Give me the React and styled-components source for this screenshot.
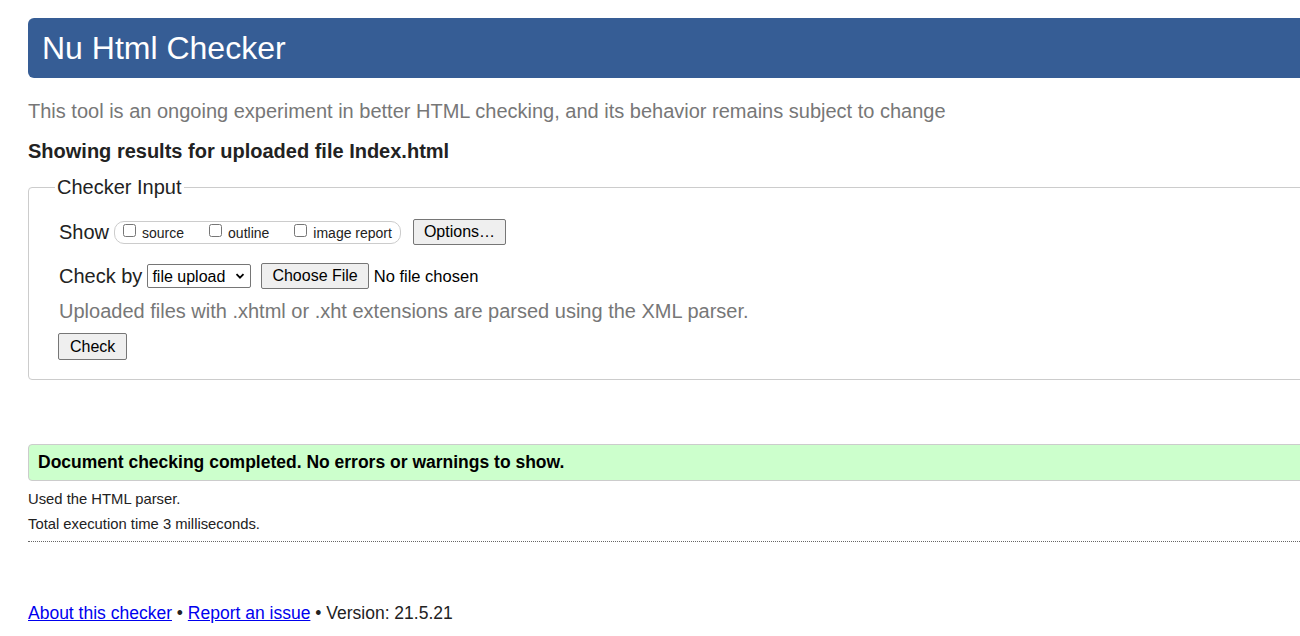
import React from 'react';
import styled, { createGlobalStyle } from 'styled-components';

const GlobalStyle = createGlobalStyle`
  html, body {
    margin: 0;
    padding: 0;
    overflow: hidden;
    background: #fff;
  }
  body {
    font-family: 'Liberation Sans', Arial, sans-serif;
    color: #222;
  }
`;

const Page = styled.div`
  width: 1320px;
  padding-left: 28px;
  padding-top: 18px;
`;

const Header = styled.header`
  height: 60px;
  background: #365d95;
  border-radius: 6px;
  padding-left: 14px;
  display: flex;
  align-items: center;
`;

const Title = styled.h1`
  margin: 0;
  font-size: 32px;
  font-weight: normal;
  color: #fff;
  line-height: 60px;
`;

const Intro = styled.p`
  margin: 21px 0 0;
  font-size: 20px;
  line-height: 24px;
  color: #777;
`;

const Heading = styled.h2`
  margin: 16px 0 0;
  font-size: 20px;
  line-height: 24px;
  font-weight: bold;
  color: #222;
`;

const Fieldset = styled.fieldset`
  margin: 13px 0 0;
  border: 1px solid #ccc;
  border-radius: 4px;
  padding: 20px 0 19px 26px;
  min-width: 0;
`;

const Legend = styled.legend`
  font-size: 20px;
  line-height: 23px;
  padding: 0 2px;
  color: #222;
`;

const Row = styled.div`
  display: flex;
  align-items: center;
  height: 26px;
  padding-left: 4px;
  margin-top: ${(p) => p.$mt || 0}px;
  font-size: 20px;
  color: #222;
`;

const RowLabel = styled.span`
  margin-right: 5px;
`;

const Group = styled.span`
  display: inline-flex;
  align-items: center;
  gap: 25px;
  height: 21px;
  padding: 0 8px;
  border: 1px solid #ccc;
  border-radius: 10px;
  font-size: 14px;
  margin-right: 12px;
  margin-top: 1px;
`;

const Opt = styled.label`
  display: inline-flex;
  align-items: center;
  gap: 6px;

  input {
    width: 13px;
    height: 13px;
    margin: 0 0 4px;
  }
`;

const Btn = styled.button`
  font-family: 'Liberation Sans', Arial, sans-serif;
  font-size: 16px;
  height: ${(p) => p.$h || 26}px;
  padding: 0 ${(p) => p.$px || 10}px;
  background: #efefef;
  color: #000;
  border: 1px solid #767676;
  border-radius: 2px;
`;

const SelectWrap = styled.span`
  position: relative;
  display: inline-flex;
  margin-right: 10px;

  svg {
    position: absolute;
    right: 6px;
    top: 8px;
    pointer-events: none;
  }
`;

const Select = styled.select`
  appearance: none;
  font-family: 'Liberation Sans', Arial, sans-serif;
  font-size: 16px;
  height: 24px;
  width: 104px;
  padding: 0 0 0 4px;
  color: #000;
  border: 1px solid #767676;
  border-radius: 2px;
  background: #fff;
`;

const FileNote = styled.span`
  font-size: 16.5px;
  color: #000;
  margin-left: 5px;
`;

const Hint = styled.p`
  margin: 10px 0 0;
  padding-left: 4px;
  font-size: 20px;
  line-height: 24px;
  color: #777;
`;

const CheckWrap = styled.div`
  margin-top: 10px;
  padding-left: 3px;
`;

const Success = styled.p`
  margin: 64px 0 0;
  padding: 8px 9px;
  background: #ccffcc;
  border: 1px solid #ccc;
  border-radius: 4px;
  font-size: 17.5px;
  line-height: 19px;
  font-weight: bold;
  color: #000;
`;

const Details = styled.div`
  padding-top: 2px;
  padding-bottom: 8px;
  border-bottom: 1px dotted #666;
`;

const Detail = styled.p`
  margin: 8px 0 0;
  font-size: 14.8px;
  line-height: 17px;
  color: #222;
`;

const Footer = styled.p`
  margin: 61px 0 0;
  font-size: 17.5px;
  line-height: 20px;
  color: #222;

  a {
    color: #0000ee;
  }
`;

export default function App() {
  return (
    <>
      <GlobalStyle />
      <Page>
        <Header>
          <Title>Nu Html Checker</Title>
        </Header>
        <Intro>
          This tool is an ongoing experiment in better HTML checking, and its behavior remains subject to change
        </Intro>
        <Heading>Showing results for uploaded file Index.html</Heading>

        <Fieldset>
          <Legend>Checker Input</Legend>
          <Row>
            <RowLabel>Show</RowLabel>
            <Group>
              <Opt>
                <input type='checkbox' />
                source
              </Opt>
              <Opt>
                <input type='checkbox' />
                outline
              </Opt>
              <Opt>
                <input type='checkbox' />
                image report
              </Opt>
            </Group>
            <Btn>Options…</Btn>
          </Row>
          <Row $mt={18}>
            <RowLabel>Check by</RowLabel>
            <SelectWrap>
              <Select defaultValue='file'>
                <option value='file'>file upload</option>
              </Select>
              <svg width='10' height='8' viewBox='0 0 10 8'>
                <path d='M1.5 2.2 L5 5.7 L8.5 2.2' fill='none' stroke='#000' strokeWidth='1.8' />
              </svg>
            </SelectWrap>
            <Btn>Choose File</Btn>
            <FileNote>No file chosen</FileNote>
          </Row>
          <Hint>Uploaded files with .xhtml or .xht extensions are parsed using the XML parser.</Hint>
          <CheckWrap>
            <Btn $px={11} $h={27}>Check</Btn>
          </CheckWrap>
        </Fieldset>

        <Success>Document checking completed. No errors or warnings to show.</Success>
        <Details>
          <Detail>Used the HTML parser.</Detail>
          <Detail>Total execution time 3 milliseconds.</Detail>
        </Details>

        <Footer>
          <a href='#about'>About this checker</a> • <a href='#issue'>Report an issue</a> • Version: 21.5.21
        </Footer>
      </Page>
    </>
  );
}
